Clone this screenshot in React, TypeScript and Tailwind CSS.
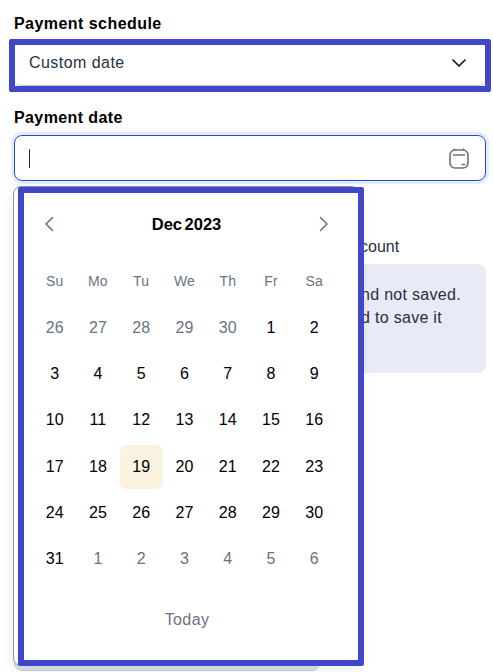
import React from "react";

const H = "border-[6px] border-[#4048c8] rounded-[2px]";
const weekdays = ["Su", "Mo", "Tu", "We", "Th", "Fr", "Sa"];
const prev = [26, 27, 28, 29, 30];
const cur = Array.from({ length: 31 }, (_, i) => i + 1);
const next = [1, 2, 3, 4, 5, 6];

function Cell({ n, muted, today }: { n: number; muted?: boolean; today?: boolean }) {
  return (
    <div
      className={`h-[44px] flex items-center justify-center text-[16px] tracking-[0.1px] rounded-[6px] ${
        muted ? "text-[#6b7280]" : "text-black"
      } ${today ? "bg-[#fbf3e0]" : ""}`}
    >
      {n}
    </div>
  );
}

export default function App() {
  return (
    <div className="relative w-[493px] h-[672px] overflow-hidden bg-white font-['Liberation_Sans',Arial,sans-serif] text-[#1f2937]">
      <div className="flex flex-col pl-[14px] pr-[7px] pt-[15px]">
        <div className="text-[16px] leading-[18px] font-bold text-black tracking-[0.45px]">Payment schedule</div>
        <div className={`mt-[6px] -mx-[5px] h-[53px] bg-white ${H}`}>
          <div className="h-full flex items-center justify-between pl-[14px] pr-[19px] pb-[4px] rounded-[6px] border-b border-[#c5c9d2]">
            <span className="text-[16px] tracking-[0.45px] text-[#27303f]">Custom date</span>
            <svg width="14" height="8" viewBox="0 0 14 8" fill="none" stroke="#111827" strokeWidth="1.7" strokeLinecap="round" strokeLinejoin="round">
              <path d="M1 1 L7 7 L13 1" />
            </svg>
          </div>
        </div>
        <div className="mt-[17px] text-[16px] leading-[18px] font-bold text-black tracking-[0.4px]">Payment date</div>
        <div className="mt-[8px] h-[46px] flex items-center justify-between pl-[14px] pr-[16px] border border-[#2546d8] rounded-[8px] ring-[3px] ring-[#e3edff]">
          <div className="w-px h-[19px] bg-[#27303f]" />
          <svg width="20" height="21" viewBox="0 0 20 21" fill="none" stroke="#6b7280" strokeWidth="1.6" strokeLinecap="round">
            <rect x="1" y="2" width="18" height="18" rx="5" />
            <path d="M4.5 7 H15.5" />
            <path d="M5.5 1 V2 M14.5 1 V2" />
            <path d="M13 16.5 H15.5" />
          </svg>
        </div>
        <div className="mt-[56px] pl-[346px] text-[16px] leading-[20px] text-[#27303f]">count</div>
        <div className="mt-[7px] h-[109px] rounded-[8px] bg-[#e8eaf8] pl-[347px] pt-[19px] text-[16px] tracking-[0.3px] leading-[23px] text-[#27303f]">
          <div>nd not saved.</div>
          <div>d to save it</div>
        </div>
      </div>

      <div className="absolute left-[14px] top-[640px] w-[306px] h-[31px] rounded-[8px] bg-[#dfe2e8] border border-[#c9ced6]" />
      <div className="absolute left-[13px] top-[186px] w-[346px] h-[480px] rounded-[8px] bg-white border border-[#8b929e] shadow-[0_4px_16px_rgba(0,0,0,0.08)]" />

      <div className={`absolute left-[18px] top-[187px] w-[346px] h-[479px] bg-white ${H} pt-[22px] pl-[9px]`}>
        <div className="w-[303px]">
          <div className="flex items-center justify-between pl-[11px] pr-[7px] h-[18px]">
            <svg width="10" height="16" viewBox="0 0 10 16" fill="none" stroke="#6b7280" strokeWidth="1.6" strokeLinecap="round" strokeLinejoin="round">
              <path d="M8.5 1.5 L2 8 L8.5 14.5" />
            </svg>
            <span className="text-[16.5px] font-bold text-black [word-spacing:-2px]">Dec 2023</span>
            <svg width="10" height="16" viewBox="0 0 10 16" fill="none" stroke="#6b7280" strokeWidth="1.6" strokeLinecap="round" strokeLinejoin="round">
              <path d="M1.5 1.5 L8 8 L1.5 14.5" />
            </svg>
          </div>
          <div className="grid grid-cols-7 mt-[38px] h-[18px] items-center text-center text-[14px] tracking-[0.2px] text-[#6b7280]">
            {weekdays.map((d) => (
              <div key={d}>{d}</div>
            ))}
          </div>
          <div className="grid grid-cols-7 gap-y-[2.2px] mt-[17px]">
            {prev.map((n) => (
              <Cell key={`p${n}`} n={n} muted />
            ))}
            {cur.map((n) => (
              <Cell key={`c${n}`} n={n} today={n === 19} />
            ))}
            {next.map((n) => (
              <Cell key={`n${n}`} n={n} muted />
            ))}
          </div>
          <div className="mt-[29px] pl-[5px] text-center text-[16px] tracking-[0.4px] leading-[20px] text-[#6b7280]">Today</div>
        </div>
      </div>
    </div>
  );
}
